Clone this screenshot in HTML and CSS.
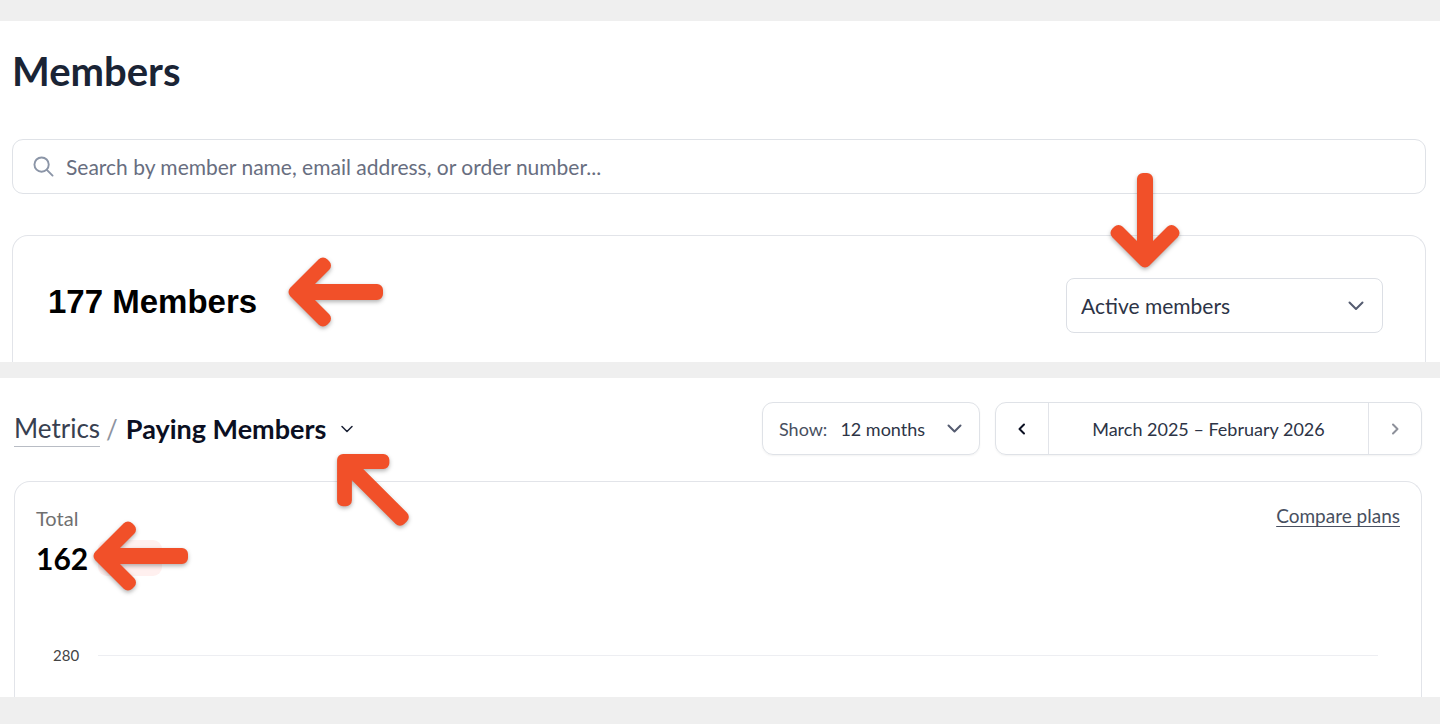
FILE: index.html
```html
<!DOCTYPE html>
<html lang="en">
<head>
<meta charset="utf-8">
<meta name="viewport" content="width=device-width, initial-scale=1">
<title>Members</title>
<link rel="stylesheet" href="styles.css">
</head>
<body>
<svg class="sprite" aria-hidden="true">
  <symbol id="arrow" viewBox="-6 -54 108 108">
    <path d="M8.500 0 37-28.500 39-26.500 14.500-2H91V2H14.500L39 26.500 37 28.500Z" fill="#f15029" stroke="#f15029" stroke-width="12" stroke-linejoin="round"/>
  </symbol>
</svg>

<main class="page">
  <section class="panel members">
    <h1 class="title">Members</h1>
    <div class="search">
      <svg class="search-icon" viewBox="0 0 22 22" aria-hidden="true"><circle cx="9" cy="9" r="7.5"/><path d="m14.5 14.5 6 6"/></svg>
      <input class="search-input" type="search" aria-label="Search members" placeholder="Search by member name, email address, or order number...">
    </div>
    <div class="card members-card">
      <h2 class="count">177 Members
        <svg class="arrow arrow-count" aria-hidden="true"><use href="#arrow"/></svg>
      </h2>
      <div class="filter">
        <select class="filter-select" aria-label="Member status"><option>Active members</option></select>
        <svg class="chevron" viewBox="0 0 18 18" aria-hidden="true"><path d="m2.5 5.500 6.500 6.500 6.500-6.500"/></svg>
        <svg class="arrow arrow-filter" viewBox="0 0 108 108" aria-hidden="true"><use href="#arrow" width="108" height="108" transform="rotate(-90 54 54)"/></svg>
      </div>
    </div>
  </section>

  <section class="panel metrics">
    <header class="toolbar">
      <nav class="crumbs" aria-label="Breadcrumb">
        <a class="crumb-link" href="#">Metrics</a>
        <span class="slash">/</span>
        <button class="crumb-current" type="button">Paying Members
          <svg class="chevron-thin" viewBox="0 0 14 14" aria-hidden="true"><path d="m2 4.500 5 5 5-5"/></svg>
        </button>
        <svg class="arrow arrow-crumb" viewBox="0 0 108 108" aria-hidden="true"><use href="#arrow" width="108" height="108" transform="rotate(45 54 54)"/></svg>
      </nav>
      <div class="controls">
        <div class="show">
          <label for="range">Show:</label>
          <select id="range" class="show-select"><option>12 months</option></select>
          <svg class="chevron" viewBox="0 0 18 18" aria-hidden="true"><path d="m3.500 5.500 6 6 6-6"/></svg>
        </div>
        <div class="period">
          <button class="step" type="button" aria-label="Previous period"><svg viewBox="0 0 12 12" aria-hidden="true"><path d="M8 1.500 3.500 6l4.500 4.500"/></svg></button>
          <span class="period-label">March 2025 – February 2026</span>
          <button class="step step-next" type="button" aria-label="Next period" disabled><svg viewBox="0 0 12 12" aria-hidden="true"><path d="M4 1.500 8.500 6l-4.500 4.500"/></svg></button>
        </div>
      </div>
    </header>
    <div class="card metrics-card">
      <div class="summary">
        <div>
          <div class="total-label">Total</div>
          <div class="total-row">
            <span class="total">162</span>
            <span class="badge"></span>
            <svg class="arrow arrow-total" aria-hidden="true"><use href="#arrow"/></svg>
          </div>
        </div>
        <a class="compare" href="#">Compare plans</a>
      </div>
      <div class="axis">
        <span class="tick">280</span>
        <span class="gridline"></span>
      </div>
    </div>
  </section>
</main>
</body>
</html>
```
FILE: styles.css
```css
* {
  box-sizing: border-box;
}

body {
  margin: 0;
  background: #efefef;
  font-family: Lato, "Open Sans", sans-serif;
  color: #2d3446;
}

button,
input,
select {
  margin: 0;
  padding: 0;
  border: 0;
  background: none;
  font: inherit;
  color: inherit;
  appearance: none;
}

svg {
  fill: none;
  stroke-linecap: round;
  stroke-linejoin: round;
}

.sprite {
  position: absolute;
  width: 0;
  height: 0;
}

.page {
  display: flex;
  flex-direction: column;
  gap: 16px;
  padding: 21px 0 27px;
}

.panel {
  overflow: hidden;
  background: #fff;
}

.card {
  border: 1px solid #e2e4e9;
  border-bottom: 0;
  border-radius: 16px 16px 0 0;
}

/* Members */

.members {
  padding: 26px 14px 0 12px;
}

.title {
  margin: 0 0 44px;
  font-size: 40px;
  line-height: 48px;
  font-weight: 700;
  color: #1a2435;
}

.search {
  display: flex;
  align-items: center;
  gap: 12px;
  height: 55px;
  margin-bottom: 41px;
  padding: 0 20px;
  border: 1px solid #dfe2e7;
  border-radius: 11px;
}

.search-icon {
  width: 21px;
  height: 21px;
  stroke: #8b95a7;
  stroke-width: 2;
}

.search-input {
  flex: 1;
  min-width: 0;
  outline: 0;
  font-size: 21px;
}

.search-input::placeholder {
  color: #686e80;
  opacity: 1;
}

.members-card {
  display: flex;
  justify-content: space-between;
  padding: 42px 42px 29px 35px;
}

.count {
  position: relative;
  margin: 0;
  font-family: "Liberation Sans", Arial, sans-serif;
  font-size: 33px;
  line-height: 48px;
  font-weight: 700;
  color: #000;
}

.filter {
  position: relative;
  display: flex;
  align-items: center;
  width: 317px;
}

.filter-select {
  width: 100%;
  height: 55px;
  padding: 0 48px 0 14px;
  border: 1px solid #dcdfe5;
  border-radius: 8px;
  font-size: 21px;
}

.chevron {
  width: 18px;
  height: 18px;
  stroke: #555c70;
  stroke-width: 2;
}

.filter .chevron {
  position: absolute;
  right: 18px;
  pointer-events: none;
}

/* Pointer arrows laid over the panels */

.arrow {
  position: absolute;
  z-index: 1;
  width: 108px;
  height: 108px;
  filter: drop-shadow(0 2px 2px rgba(0, 0, 0, 0.3));
  pointer-events: none;
}

.arrow-count {
  top: -40px;
  left: 232px;
}

.arrow-filter {
  top: -110px;
  left: 25px;
}

.arrow-crumb {
  top: 32px;
  left: 303px;
}

.arrow-total {
  top: -36px;
  left: 49px;
}

/* Metrics */

.metrics {
  padding: 24px 18px 0 14px;
}

.toolbar {
  display: flex;
  justify-content: space-between;
  margin-bottom: 26px;
}

.crumbs {
  position: relative;
  display: flex;
  align-items: center;
  height: 53px;
  font-size: 26px;
  line-height: 36px;
}

.crumb-link {
  border-bottom: 1px solid #b8bcc4;
  color: #384050;
  text-decoration: none;
}

.slash {
  margin: 0 8px 0 6px;
  color: #8d93a0;
}

.crumb-current {
  display: flex;
  align-items: center;
  gap: 14px;
  font-size: 27px;
  font-weight: 700;
  color: #0b0f22;
}

.chevron-thin {
  width: 14px;
  height: 14px;
  stroke: #1a2135;
  stroke-width: 1.5;
}

.controls {
  display: flex;
  gap: 15px;
  font-size: 18px;
}

.show,
.period {
  display: flex;
  align-items: center;
  height: 53px;
  border: 1px solid #dfe2e7;
  border-radius: 11px;
  box-shadow: 0 1px 2px rgba(0, 0, 0, 0.05);
}

.show {
  width: 218px;
  padding: 0 16px;
}

.show label {
  margin-right: 13px;
  color: #484f60;
}

.show-select {
  flex: 1;
  min-width: 0;
}

.period {
  width: 427px;
}

.step {
  display: flex;
  align-items: center;
  justify-content: center;
  width: 52px;
  height: 100%;
}

.step svg {
  width: 12px;
  height: 12px;
  stroke: #0b1022;
  stroke-width: 2;
}

.step-next svg {
  stroke: #8d909a;
}

.period-label {
  display: flex;
  flex: 1;
  align-items: center;
  justify-content: center;
  height: 100%;
  border: solid #e2e4e9;
  border-width: 0 1px;
}

.metrics-card {
  padding: 20px 21px 32px;
}

.summary {
  display: flex;
  justify-content: space-between;
}

.total-label {
  font-size: 20px;
  line-height: 32px;
  color: #707070;
}

.total-row {
  position: relative;
  display: flex;
  align-items: center;
  gap: 10px;
  height: 40px;
  margin-top: 4px;
}

.total {
  font-size: 30px;
  line-height: 36px;
  font-weight: 700;
  color: #000;
}

.badge {
  width: 64px;
  height: 36px;
  border-radius: 9px;
  background: #fff0ef;
}

.compare {
  font-size: 19px;
  line-height: 28px;
  color: #484f60;
  text-underline-offset: 3px;
}

.axis {
  display: flex;
  align-items: center;
  gap: 19px;
  margin-top: 67px;
  padding: 0 22px 0 17px;
}

.tick {
  font-size: 15px;
  line-height: 20px;
  color: #444;
}

.gridline {
  flex: 1;
  height: 1px;
  background: #edeef2;
}
```
